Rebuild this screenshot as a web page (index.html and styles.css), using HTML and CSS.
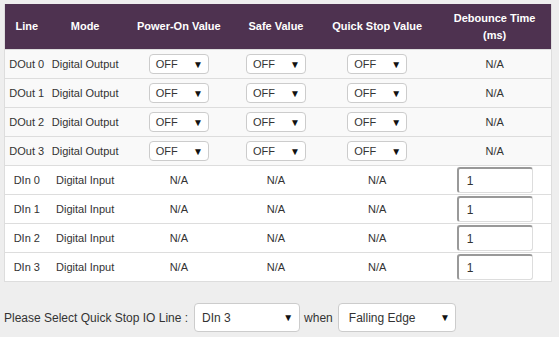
FILE: index.html
```html
<!DOCTYPE html>
<html>
<head>
<meta charset="utf-8">
<link rel="stylesheet" href="styles.css">
</head>
<body>
<table class="io-table">
  <colgroup>
    <col class="c-line"><col class="c-mode"><col class="c-pon"><col class="c-safe"><col class="c-qs"><col class="c-deb">
  </colgroup>
  <thead>
    <tr>
      <th>Line</th>
      <th>Mode</th>
      <th>Power-On Value</th>
      <th>Safe Value</th>
      <th>Quick Stop Value</th>
      <th>Debounce Time<br>(ms)</th>
    </tr>
  </thead>
  <tbody>
    <tr class="out">
      <td>DOut 0</td><td>Digital Output</td>
      <td><div class="sel"><span>OFF</span><span class="arr">▼</span></div></td>
      <td><div class="sel"><span>OFF</span><span class="arr">▼</span></div></td>
      <td><div class="sel"><span>OFF</span><span class="arr">▼</span></div></td>
      <td>N/A</td>
    </tr>
    <tr class="out">
      <td>DOut 1</td><td>Digital Output</td>
      <td><div class="sel"><span>OFF</span><span class="arr">▼</span></div></td>
      <td><div class="sel"><span>OFF</span><span class="arr">▼</span></div></td>
      <td><div class="sel"><span>OFF</span><span class="arr">▼</span></div></td>
      <td>N/A</td>
    </tr>
    <tr class="out">
      <td>DOut 2</td><td>Digital Output</td>
      <td><div class="sel"><span>OFF</span><span class="arr">▼</span></div></td>
      <td><div class="sel"><span>OFF</span><span class="arr">▼</span></div></td>
      <td><div class="sel"><span>OFF</span><span class="arr">▼</span></div></td>
      <td>N/A</td>
    </tr>
    <tr class="out">
      <td>DOut 3</td><td>Digital Output</td>
      <td><div class="sel"><span>OFF</span><span class="arr">▼</span></div></td>
      <td><div class="sel"><span>OFF</span><span class="arr">▼</span></div></td>
      <td><div class="sel"><span>OFF</span><span class="arr">▼</span></div></td>
      <td>N/A</td>
    </tr>
    <tr class="in">
      <td>DIn 0</td><td>Digital Input</td><td>N/A</td><td>N/A</td><td>N/A</td>
      <td><div class="num">1</div></td>
    </tr>
    <tr class="in">
      <td>DIn 1</td><td>Digital Input</td><td>N/A</td><td>N/A</td><td>N/A</td>
      <td><div class="num">1</div></td>
    </tr>
    <tr class="in">
      <td>DIn 2</td><td>Digital Input</td><td>N/A</td><td>N/A</td><td>N/A</td>
      <td><div class="num">1</div></td>
    </tr>
    <tr class="in">
      <td>DIn 3</td><td>Digital Input</td><td>N/A</td><td>N/A</td><td>N/A</td>
      <td><div class="num">1</div></td>
    </tr>
  </tbody>
</table>
<div class="qs-row">
  <span class="qs-label">Please Select Quick Stop IO Line :</span>
  <div class="big-sel line-sel"><span>DIn 3</span><span class="arr">▼</span></div>
  <span class="when">when</span>
  <div class="big-sel edge-sel"><span>Falling Edge</span><span class="arr">▼</span></div>
</div>
</body>
</html>
```
FILE: styles.css
```css
html, body {
  margin: 0;
  background: #eeeeee;
}
body {
  padding: 4px;
  font-family: "Liberation Sans", Arial, sans-serif;
  color: #333;
}
.io-table {
  border-collapse: collapse;
  table-layout: fixed;
  width: 548px;
  background: #fff;
  border: 1px solid #dddddd;
  border-top: none;
  font-size: 11px;
}
.c-line { width: 44px; }
.c-mode { width: 73px; }
.c-pon { width: 114px; }
.c-safe { width: 80px; }
.c-qs { width: 122px; }
.c-deb { width: 113px; }
.io-table th {
  background: #4e3250;
  color: #fff;
  font-weight: bold;
  height: 45px;
  padding: 0;
  text-align: center;
  vertical-align: middle;
  line-height: 17px;
  border: none;
}
.io-table td {
  height: 28px;
  padding: 0;
  text-align: center;
  vertical-align: middle;
  border-top: 1px solid #dddddd;
  white-space: nowrap;
}
.io-table tr.out td { background: #f9f9f9; }
.io-table tr.in td { background: #ffffff; }
.sel {
  display: inline-flex;
  align-items: center;
  justify-content: space-between;
  box-sizing: border-box;
  width: 60px;
  height: 20px;
  padding: 0 5px 0 6px;
  background: #fff;
  border: 1px solid #cccccc;
  border-radius: 4px;
  font-size: 11px;
  color: #333;
  vertical-align: middle;
}
.arr {
  font-size: 10px;
  color: #111;
}
.num {
  display: inline-flex;
  align-items: center;
  box-sizing: border-box;
  width: 76px;
  height: 26px;
  padding-left: 8px;
  background: #fff;
  border-style: solid;
  border-width: 2px 1px 1px 2px;
  border-color: #999999 #dddddd #dddddd #999999;
  border-radius: 3px;
  font-size: 12px;
  color: #333;
  vertical-align: middle;
  text-align: left;
}
.qs-row {
  display: flex;
  align-items: center;
  margin-top: 21px;
  font-size: 12px;
}
.qs-label { margin-right: 6px; }
.big-sel {
  display: flex;
  align-items: center;
  justify-content: space-between;
  box-sizing: border-box;
  height: 29px;
  background: #fff;
  border: 1px solid #cccccc;
  border-radius: 4px;
  font-size: 12px;
  color: #333;
}
.line-sel { width: 106px; padding: 0 6px 0 7px; }
.edge-sel { width: 118px; padding: 0 5px 0 10px; }
.when { margin: 0 5px 0 4px; }
```
